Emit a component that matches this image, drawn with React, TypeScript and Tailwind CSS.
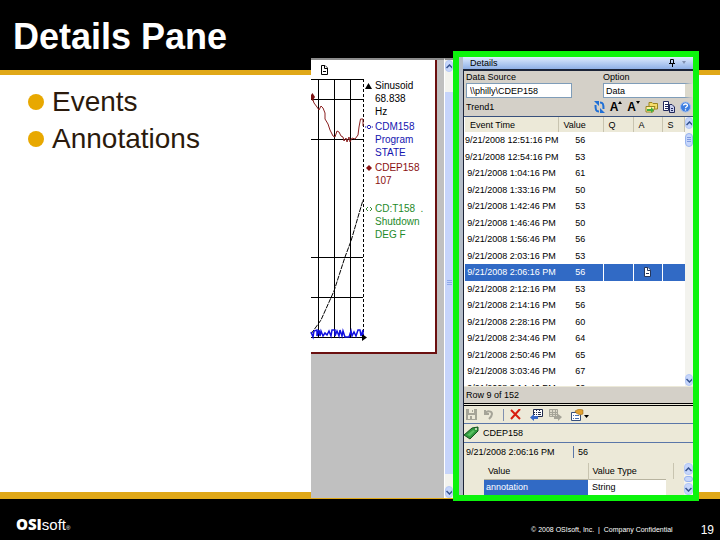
import React, { useState } from "react";

interface EventRow {
  time: string;
  value: number;
  annotated?: boolean;
}

interface LegendItem {
  lines: string[];
  color: string;
  marker: React.ReactNode;
}

const events: EventRow[] = [
  { time: "9/21/2008 12:51:16 PM", value: 56 },
  { time: "9/21/2008 12:54:16 PM", value: 53 },
  { time: "9/21/2008 1:04:16 PM", value: 61 },
  { time: "9/21/2008 1:33:16 PM", value: 50 },
  { time: "9/21/2008 1:42:46 PM", value: 53 },
  { time: "9/21/2008 1:46:46 PM", value: 50 },
  { time: "9/21/2008 1:56:46 PM", value: 56 },
  { time: "9/21/2008 2:03:16 PM", value: 53 },
  { time: "9/21/2008 2:06:16 PM", value: 56, annotated: true },
  { time: "9/21/2008 2:12:16 PM", value: 53 },
  { time: "9/21/2008 2:14:16 PM", value: 56 },
  { time: "9/21/2008 2:28:16 PM", value: 60 },
  { time: "9/21/2008 2:34:46 PM", value: 64 },
  { time: "9/21/2008 2:50:46 PM", value: 65 },
  { time: "9/21/2008 3:03:46 PM", value: 67 },
  { time: "9/21/2008 3:14:46 PM", value: 69 },
];

const legend: LegendItem[] = [
  {
    lines: ["Sinusoid", "68.838", "Hz"],
    color: "text-black",
    marker: <path d="M3.5 1L7 7H0z" fill="#000" />,
  },
  {
    lines: ["CDM158", "Program", "STATE"],
    color: "text-[#1515b0]",
    marker: (
      <path d="M0 4H1M7 4H8M3 2.5H5L6 4L5 5.5H3L2 4z" fill="none" stroke="#1515b0" />
    ),
  },
  {
    lines: ["CDEP158", "107"],
    color: "text-[#8a1010]",
    marker: <path d="M4 1L7 4L4 7L1 4z" fill="#8a1010" />,
  },
  {
    lines: ["CD:T158  .", "Shutdown", "DEG F"],
    color: "text-[#1e8a2a]",
    marker: <path d="M3 2L1 4L3 6M5 2L7 4L5 6" fill="none" stroke="#3a8a3a" />,
  },
];

const NoteIcon: React.FC<{ stroke: string; fill: string }> = ({ stroke, fill }) => (
  <svg width="9" height="10" viewBox="0 0 9 10" fill={fill} stroke={stroke}>
    <path d="M1.5 0.5H5L7.5 3V9.500H1.500z" />
    <path d="M4.500 0.500V3.500H7.500M3 6.500H6" />
  </svg>
);

const ScrollArrow: React.FC<{ up?: boolean; label: string }> = ({ up, label }) => (
  <button
    aria-label={label}
    className="flex h-3 w-full shrink-0 items-center justify-center overflow-hidden rounded-sm border border-[#b4c8f6] bg-[#c6d6fb]"
  >
    <svg width="7" height="5" viewBox="0 0 7 5" className="shrink-0" fill="none" stroke="#35538f" strokeWidth="1.5">
      <path d={up ? "M0.500 4L3.500 1L6.500 4" : "M0.500 1L3.500 4L6.500 1"} />
    </svg>
  </button>
);

const Trend = () => (
  <svg width="54" height="266" viewBox="311 76 54 266" className="shrink-0 overflow-visible" fill="none">
    <path
      d="M311 79.500H363M311 99.500H363M311 139.500H363M311 257.500H363M311 297.500H363M311 337.500H364M318.500 79V337M334.500 79V337M350.500 79V337"
      stroke="#000"
    />
    <path d="M363.500 79V337" stroke="#000" strokeDasharray="3 2" />
    <path d="M362 334L367 337.500L362 341z" fill="#000" />
    <path
      d="M312 97L314 103L317 107L319 110L321 106L323 108L325 113V119L328 124L330 130L333 136L335 137L337 131L339 132L341 136L343 137L344 141L346 138L347 142L349 137L350 142L352 138L355 139L358 135L359 127L360.500 119H363V126"
      stroke="#8a2020"
    />
    <path d="M312.500 93L315 97L312.500 101L311 99V95z" fill="#7a1010" />
    <path d="M311 334L321 320L334 291L345 257L351 241L363 200" stroke="#000" strokeDasharray="5 1" />
    <path
      d="M311 332L313 337L314 331L317 330V336L319 330L320 336L321 331L323 336L325 333L327 335L329 331L331 336L332 330L335 330V336L337 331L339 336L340 330L342 336L343 331L345 337H349L351 331L352 336L354 332L356 336L358 330L360 330L361 336L363 330V335"
      stroke="#1010e0"
      strokeWidth="1.5"
    />
  </svg>
);

const ChartWindow = () => (
  <section aria-label="Trend" className="relative z-10 -mt-[17px] -mb-[6px] flex w-[142px] shrink-0 bg-[#c0c0c0]">
    <div className="flex min-w-0 flex-1 flex-col border-t-2 border-[#8c8c8c]">
      <div className="mr-[7px] h-[294px] border-r-2 border-b-2 border-[#6b1010] bg-white">
        <div className="flex h-4 items-center pt-1 pl-[9px]">
          <NoteIcon stroke="#000" fill="#fff" />
        </div>
        <div className="flex">
          <Trend />
          <ul className="flex flex-col gap-[2px] pt-[3px] text-[10px] leading-[13px]">
            {legend.map((item) => (
              <li key={item.lines[0]} className={`flex min-h-[39px] gap-[2px] ${item.color}`}>
                <svg width="8" height="8" viewBox="0 0 8 8" className="mt-[3px] shrink-0">
                  {item.marker}
                </svg>
                <div className="whitespace-pre">
                  {item.lines.map((line) => (
                    <p key={line}>{line}</p>
                  ))}
                </div>
              </li>
            ))}
          </ul>
        </div>
      </div>
    </div>
    <div className="flex w-[9px] flex-col border-t-2 border-l border-t-[#8c8c8c] border-l-white bg-[#f3f3ee]">
      <ScrollArrow up label="Scroll trend up" />
      <div className="mt-5 mb-3 flex flex-1 items-center justify-center bg-[#c6d4fa]">
        <svg width="5" height="6" viewBox="0 0 5 6" stroke="#8fa9e8">
          <path d="M0 0.500H5M0 2.500H5M0 4.500H5" />
        </svg>
      </div>
      <ScrollArrow label="Scroll trend down" />
    </div>
  </section>
);

const TrendTools = () => (
  <div className="flex items-center gap-[5px]">
    <button aria-label="Refresh">
      <svg width="11" height="12" viewBox="0 0 11 12" fill="none" stroke="#1f6fd6" strokeWidth="2">
        <path d="M5 10.500C2 10.500 1.500 9 1.500 4M6 1.500C9 1.500 9.500 3 9.500 8" />
        <path d="M0 0H5V5zM11 12H6V7z" fill="#1f6fd6" stroke="none" />
      </svg>
    </button>
    <button aria-label="Increase font" className="flex text-[12px] leading-3 font-bold">
      A
      <svg width="4" height="4" viewBox="0 0 4 4">
        <path d="M2 0L4 3H0z" />
      </svg>
    </button>
    <button aria-label="Decrease font" className="flex text-[12px] leading-3 font-bold">
      A
      <svg width="4" height="4" viewBox="0 0 4 4">
        <path d="M0 0H4L2 3z" />
      </svg>
    </button>
    <button aria-label="Open">
      <svg width="13" height="12" viewBox="0 0 13 12">
        <path d="M4 1.500H7L8 2.500H12.500V8H4z" fill="#f5dc6a" stroke="#9a8420" />
        <path d="M1 5.500H10L8 11H1z" fill="#fff2a0" stroke="#9a8420" />
        <path d="M2 8H6V6L9 9L6 12V10H2z" fill="#3fae3f" />
      </svg>
    </button>
    <button aria-label="Copy">
      <svg width="12" height="12" viewBox="0 0 12 12" stroke="#20285c">
        <path d="M0.500 0.500H5.500V9.500H0.500z" fill="#fff" />
        <path d="M2 3.500H5M2 5.500H5M2 7.500H5" />
        <path d="M6.500 3.500H9L11.500 6V11.500H6.500z" fill="#c9cfee" />
        <path d="M8 7.500H10M8 9.500H10" />
      </svg>
    </button>
    <button aria-label="Help">
      <svg width="11" height="12" viewBox="0 0 11 12" fill="none">
        <circle cx="5.500" cy="6" r="5" fill="#3b7de0" stroke="#9dbcf0" />
        <path d="M3.500 4.500C3.500 2.500 7.500 2.500 7.500 4.500C7.500 6 5.500 5.500 5.500 7.200M5.500 8.300V9.500" stroke="#fff" strokeWidth="1.300" />
      </svg>
    </button>
  </div>
);

const ItemToolbar = () => (
  <div className="flex h-[18px] items-center gap-[6px] border-b border-[#5a76a8] px-[2px]">
    <button aria-label="Save">
      <svg width="11" height="11" viewBox="0 0 11 11">
        <path d="M0 0H11V11H0z" fill="#a5a498" />
        <path d="M3 0H8V4H3zM2 6H9V10H2z" fill="#ece9d8" />
        <path d="M6 1H7V3H6zM4 7H6V11H4z" fill="#a5a498" />
      </svg>
    </button>
    <button aria-label="Undo">
      <svg width="11" height="11" viewBox="0 0 11 11" fill="none" stroke="#a5a498" strokeWidth="2">
        <path d="M2 1V5H6M2 5C4 1 9 2 9 5C9 7 8 8 6 10" />
      </svg>
    </button>
    <span className="ml-[3px] h-3 w-px bg-[#8090b0]" />
    <button aria-label="Delete">
      <svg width="11" height="11" viewBox="0 0 11 11" stroke="#d81e10" strokeWidth="2">
        <path d="M1 1L10 10M10 0L1 10" />
      </svg>
    </button>
    <button aria-label="Import" className="ml-[3px]">
      <svg width="13" height="12" viewBox="0 0 13 12">
        <path d="M3.500 0.500H12.500V7.500H3.500z" fill="#fff" stroke="#222c4c" />
        <path d="M6.500 1V7M9.500 1V7M4 3.500H12M4 5.500H12" stroke="#222c4c" strokeDasharray="1 1" />
        <path d="M8 7H4V5L0 8.500L4 12V10H8z" fill="#3769c8" />
      </svg>
    </button>
    <button aria-label="Export">
      <svg width="13" height="12" viewBox="0 0 13 12">
        <path d="M0.500 0.500H8.500V7.500H0.500z" fill="#dcd9ca" stroke="#a5a498" />
        <path d="M3.500 1V7M6.500 1V7M1 3.500H9M1 5.500H9" stroke="#a5a498" />
        <path d="M5 7H9V5L13 8L9 12V10H5z" fill="#a5a498" />
      </svg>
    </button>
    <button aria-label="Properties" className="ml-[3px] flex items-center">
      <svg width="18" height="12" viewBox="0 0 18 12">
        <path d="M0.500 3.500H9.500V11.500H0.500z" fill="#fff" stroke="#38507c" />
        <path d="M2 6.500H3M4 6.500H8M2 9.500H3M4 9.500H8" stroke="#4870b0" />
        <path d="M4 2L8 0L12 1V5L9 6L5 4z" fill="#e0a030" stroke="#8c5c10" strokeWidth="0.500" />
        <path d="M13 6H18L15.500 9z" fill="#000" />
      </svg>
    </button>
  </div>
);

const DetailsPane = () => {
  const [source, setSource] = useState<string>("\\\\philly\\CDEP158");
  const [selected, setSelected] = useState<number>(8);

  return (
    <section
      aria-label="Details"
      className="relative z-10 -mt-6 mr-[21px] -mb-[9px] flex w-[246px] shrink-0 flex-col border-6 border-[#0cf40c] bg-[#b4bcc8] pl-1 text-[9px] leading-3 text-black"
    >
      <div className="flex h-[14px] items-center border-b-2 border-[#1c2438] bg-linear-to-b from-[#dfebfd] to-[#8fb0e6] pr-1 pl-[7px]">
        <h2 className="flex-1">Details</h2>
        <svg width="20" height="8" viewBox="0 0 20 8" fill="none" stroke="#000">
          <path d="M1.500 0.500H4.500V4.500H1.500zM0 4.500H6M3.500 5V8" />
          <path d="M13 2H17L15 5z" fill="#8090b0" stroke="none" />
        </svg>
      </div>

      <div className="flex min-h-0 flex-1 flex-col border-l border-[#1c2438]">
        <div className="bg-[#d4d0c8] pl-[2px]">
          <div className="flex justify-between">
            <label className="w-[106px]">
              Data Source
              <input
                value={source}
                onChange={(e) => setSource(e.target.value)}
                className="block h-[15px] w-full border border-[#7f9db9] bg-white px-[3px]"
              />
            </label>
            <label className="w-[90px]">
              Option
              <select className="block h-[15px] w-full appearance-none border border-r-8 border-[#7f9db9] border-r-[#dcd9cc] bg-white px-[2px]">
                <option>Data</option>
              </select>
            </label>
          </div>
          <div className="flex h-[18px] items-center justify-between pr-[2px]">
            <h3>Trend1</h3>
            <TrendTools />
          </div>
        </div>

        <div className="flex h-[270px] border-t border-[#38507c] bg-white">
          <div className="min-w-0 flex-1 overflow-hidden pl-px">
            <table className="h-[279px] w-full table-fixed border-collapse text-center">
              <colgroup>
                <col className="w-[93px]" />
                <col className="w-[45px]" />
                <col className="w-[30px]" />
                <col className="w-[29px]" />
                <col />
              </colgroup>
              <thead>
                <tr className="h-[15px] bg-[#ece9d8] text-left">
                  {["Event Time", "Value", "Q", "A", "S"].map((name) => (
                    <th key={name} className="border-r border-[#c8c4b0] p-0 pl-[5px] font-normal">
                      {name}
                    </th>
                  ))}
                </tr>
              </thead>
              <tbody>
                {events.map((row, i) => (
                  <tr
                    key={row.time}
                    onClick={() => setSelected(i)}
                    className={i === selected ? "bg-[#316ac5] text-white" : "bg-white"}
                  >
                    <td className="p-0 whitespace-nowrap">{row.time}</td>
                    <td className="border-r border-white p-0">{row.value}</td>
                    <td className="border-r border-white p-0" />
                    <td className="border-r border-white p-0">
                      {row.annotated && (
                        <span className="flex justify-center">
                          <NoteIcon stroke="#24365c" fill="#fff" />
                        </span>
                      )}
                    </td>
                    <td className="p-0" />
                  </tr>
                ))}
              </tbody>
            </table>
          </div>
          <div className="flex w-2 flex-col bg-[#f3f3ee]">
            <ScrollArrow up label="Scroll events up" />
            <div className="mt-1 flex h-[14px] items-center justify-center rounded-sm border border-[#98b4ee] bg-[#c6d6fb]">
              <svg width="4" height="6" viewBox="0 0 4 6" stroke="#7f9be0">
                <path d="M0 0.500H4M0 2.500H4M0 4.500H4" />
              </svg>
            </div>
            <div className="flex-1" />
            <ScrollArrow label="Scroll events down" />
          </div>
        </div>

        <p className="flex h-[17px] items-center border-t border-[#ece9d8] bg-[#d4d0c8] pl-[2px]">Row 9 of 152</p>

        <div className="flex min-h-0 flex-1 flex-col border-t-3 border-double border-black bg-[#ece9d8]">
          <ItemToolbar />
          <div className="flex h-[19px] items-center gap-1 border-b border-[#5a76a8]">
            <svg width="15" height="14" viewBox="0 0 15 14">
              <path d="M0 9L8 2L14 1L14 5L6 13z" fill="#2f9a3c" stroke="#17501f" />
              <path d="M3 9L9 4L11 5L6 10z" fill="#58c060" />
              <circle cx="12" cy="3" r="1" fill="#ece9d8" />
            </svg>
            <h3>CDEP158</h3>
          </div>
          <div className="flex h-[18px] items-center pl-[2px]">
            <span className="w-[107px]">9/21/2008 2:06:16 PM</span>
            <span className="h-3 border-l border-[#5a76a8] pl-1">56</span>
          </div>
          <div className="flex min-h-0 flex-1 pt-[2px]">
            <div className="min-w-0 flex-1 pl-5">
              <table className="w-full table-fixed border-collapse text-left">
                <thead>
                  <tr className="h-4 border-b border-[#b8b4a0]">
                    <th className="w-[104px] border-r border-[#c8c4b0] p-0 pl-1 font-normal">Value</th>
                    <th className="border-r border-[#c8c4b0] p-0 pl-1 font-normal">Value Type</th>
                  </tr>
                </thead>
                <tbody>
                  <tr className="h-4">
                    <td className="bg-[#316ac5] p-0 pl-[2px] text-white">annotation</td>
                    <td className="border-r-[14px] border-[#ece9d8] bg-white p-0 pl-1">String</td>
                  </tr>
                </tbody>
              </table>
            </div>
            <div className="ml-1 flex w-[9px] flex-col justify-between bg-[#f3f3ee]">
              <ScrollArrow up label="Scroll values up" />
              <div className="h-[6px] rounded-sm border border-[#98b4ee] bg-[#c6d6fb]" />
              <ScrollArrow label="Scroll values down" />
            </div>
          </div>
        </div>
      </div>
    </section>
  );
};

const App = () => {
  return (
    <div className="flex min-h-screen flex-col bg-white font-['Liberation_Sans',Arial,sans-serif]">
      <header className="flex h-[75px] items-center border-b-5 border-[#e0a818] bg-black pt-1 pl-[13px]">
        <h1 className="text-4xl font-bold text-white">Details Pane</h1>
      </header>

      <main className="flex flex-1">
        <ul className="flex min-w-0 flex-1 flex-col gap-[5px] pt-[11px] pl-7 text-[28px] leading-8 text-[#2b1a0c]">
          {["Events", "Annotations"].map((topic) => (
            <li key={topic} className="flex items-center gap-2">
              <span className="size-4 rounded-full bg-[#e8a800]" />
              {topic}
            </li>
          ))}
        </ul>
        <ChartWindow />
        <DetailsPane />
      </main>

      <footer className="flex h-12 items-center border-t-7 border-[#e0a818] bg-black pt-5 pr-[6px] pl-4 text-white">
        <p className="flex-1 pb-2 text-[15px] leading-4">
          <span className="font-['Open_Sans',sans-serif] font-extrabold">OSI</span>soft
          <span className="text-[6px]">®</span>
        </p>
        <p className="text-[7px] leading-3">© 2008 OSIsoft, Inc.&nbsp; |&nbsp; Company Confidential</p>
        <p className="ml-7 text-[12px] leading-4">19</p>
      </footer>
    </div>
  );
};

export default App;
